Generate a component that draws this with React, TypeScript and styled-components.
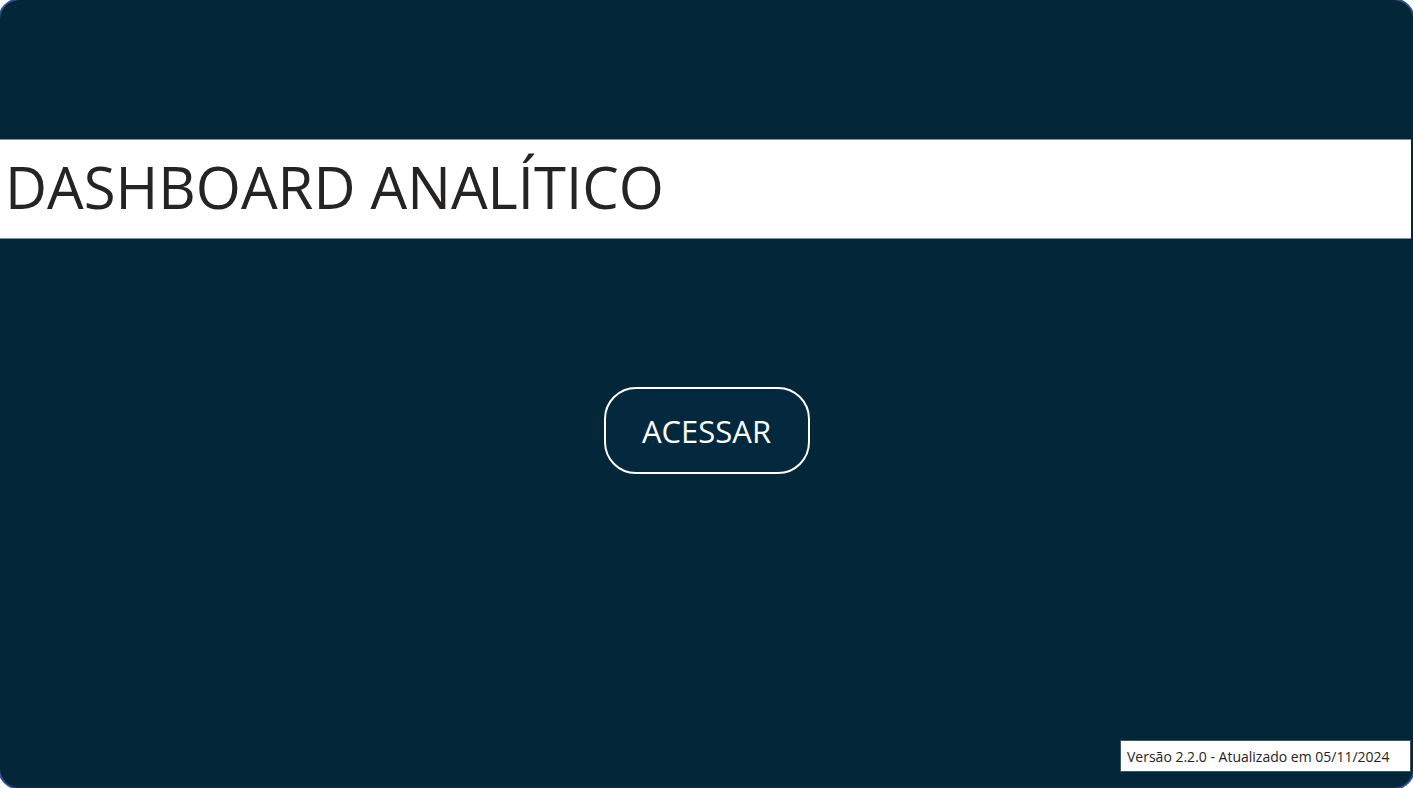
import React from "react";
import styled, { createGlobalStyle } from "styled-components";

const GlobalStyle = createGlobalStyle`
  *, *::before, *::after { box-sizing: border-box; }
  body {
    margin: 0;
    background: #ffffff;
    font-family: "Segoe UI", "Open Sans", "Noto Sans", sans-serif;
  }
`;

const Page = styled.div`
  display: flex;
  flex-direction: column;
  min-height: 100vh;
  padding: 139px 0 15px;
  background: #032639;
  border-bottom: 1px solid #0b2c4c;
  border-radius: 20px;
  box-shadow: 0 0 0 2px #2f4f8f;
`;

const Banner = styled.header`
  min-height: 100px;
  margin-right: 2px;
  padding: 7px 5px 11px;
  background: #ffffff;
  border: solid #7f929c;
  border-width: 1px 0;
`;

const Title = styled.h1`
  margin: 0;
  color: #252423;
  font-size: 58px;
  font-weight: 400;
  line-height: 80px;
`;

const Main = styled.main`
  display: flex;
  flex: 1;
  flex-direction: column;
  align-items: center;
  padding-top: 148px;
`;

const AccessButton = styled.button`
  min-width: 206px;
  height: 87px;
  padding: 0 24px;
  color: #ffffff;
  background: #04293e;
  border: 2px solid #ffffff;
  border-radius: 32px;
  font-family: inherit;
  font-size: 31px;
  line-height: 40px;
  cursor: pointer;
`;

const Version = styled.footer`
  align-self: flex-end;
  min-width: 291px;
  margin-right: 2px;
  padding: 2px 6px 0;
  color: #252423;
  background: #ffffff;
  border: 1px solid #3c5665;
  font-size: 14px;
  line-height: 28px;
`;

export default function App() {
  return (
    <>
      <GlobalStyle />
      <Page>
        <Banner>
          <Title>DASHBOARD ANALÍTICO</Title>
        </Banner>
        <Main>
          <AccessButton type="button">ACESSAR</AccessButton>
        </Main>
        <Version>Versão 2.2.0 - Atualizado em 05/11/2024</Version>
      </Page>
    </>
  );
}
